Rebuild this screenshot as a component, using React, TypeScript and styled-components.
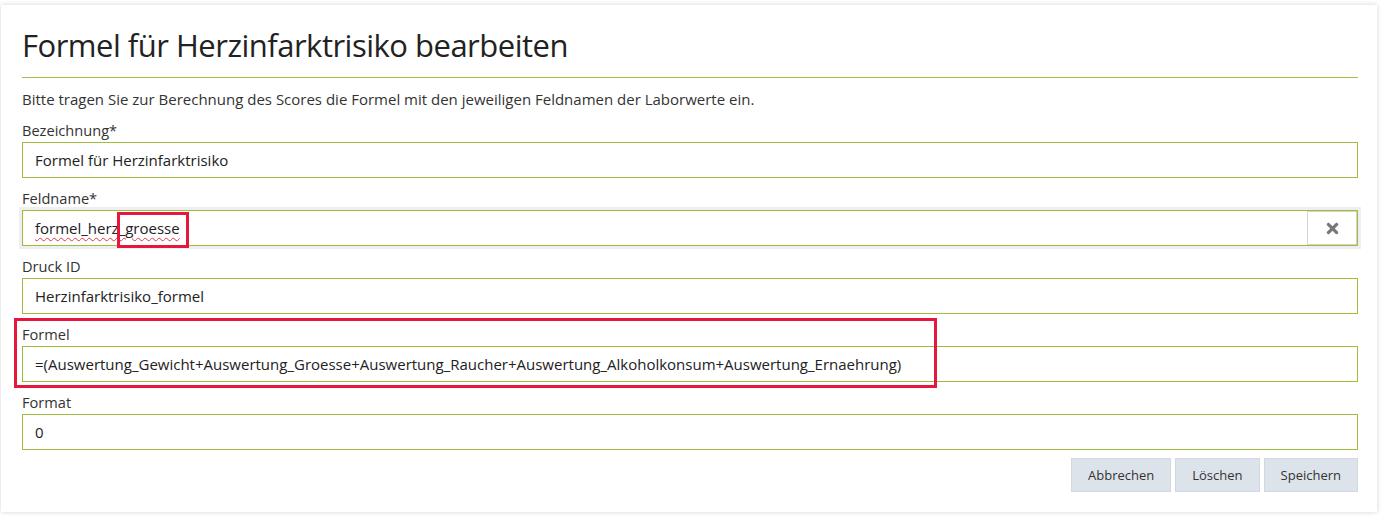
import React from "react";
import styled, { createGlobalStyle } from "styled-components";
import { FaTimes } from "react-icons/fa";

const GlobalStyle = createGlobalStyle`
  html, body { margin: 0; padding: 0; background: #ffffff; }
  body { font-family: "Open Sans", "Noto Sans", "Liberation Sans", sans-serif; color: #333; }
  * { box-sizing: border-box; }
`;

const Page = styled.div`
  padding: 5px 5px 5px 1px;
  width: 1382px;
`;

const Card = styled.div`
  background: #fff;
  box-shadow: 0 0 5px rgba(0, 0, 0, 0.18);
  padding: 0 19px 20px 20px;
`;

const Title = styled.h1`
  margin: 0;
  padding: 21px 0 13px 1px;
  font-size: 31px;
  line-height: 38px;
  letter-spacing: -0.5px;
  font-weight: 400;
  color: #222;
`;

const Divider = styled.hr`
  margin: 0 0 0 1px;
  border: 0;
  border-top: 1px solid #a3bf4a;
`;

const Intro = styled.p`
  margin: 11px 0 11px 1px;
  font-size: 15px;
  line-height: 20px;
  color: #333;
`;

const Field = styled.div`
  position: relative;
  margin-bottom: 10px;
  padding-left: 1px;
`;

const Label = styled.label`
  display: block;
  font-size: 14.6px;
  line-height: 20px;
  margin-bottom: 2px;
  color: #333;
`;

const InputBox = styled.div<{ $framed?: boolean }>`
  position: relative;
  display: flex;
  align-items: stretch;
  height: 36px;
  border: 1px solid #9dbd3c;
  background: #fff;
  box-shadow: ${(p) => (p.$framed ? "0 0 0 3px #efefef" : "none")};
`;

const Value = styled.div`
  flex: 1;
  display: flex;
  align-items: center;
  padding-left: 12px;
  font-size: 15px;
  color: #222;
  white-space: nowrap;
`;

const Misspelled = styled.span`
  text-decoration: underline wavy #e0383d;
  text-decoration-thickness: 1px;
  text-underline-offset: 3px;
`;

const ClearButton = styled.button`
  width: 50px;
  margin: 0;
  border: 1px solid #d4d4d4;
  background: #fff;
  display: flex;
  align-items: center;
  justify-content: center;
  color: #777;
  font-size: 17px;
  padding: 0;
`;

const Highlight = styled.div<{ $top: number; $left: number; $width: number; $height: number }>`
  position: absolute;
  top: ${(p) => p.$top}px;
  left: ${(p) => p.$left}px;
  width: ${(p) => p.$width}px;
  height: ${(p) => p.$height}px;
  border: 3px solid #e5173f;
  pointer-events: none;
`;

const Actions = styled.div`
  display: flex;
  justify-content: flex-end;
  gap: 4px;
  margin-top: -2px;
`;

const ActionButton = styled.button`
  height: 34px;
  padding: 0 16px;
  background: #dde3ea;
  border: 1px solid #d1d8df;
  font-family: "Open Sans", "Noto Sans", "Liberation Sans", sans-serif;
  font-size: 13px;
  color: #333;
`;

export default function App() {
  return (
    <Page>
      <GlobalStyle />
      <Card>
        <Title>Formel für Herzinfarktrisiko bearbeiten</Title>
        <Divider />
        <Intro>
          Bitte tragen Sie zur Berechnung des Scores die Formel mit den jeweiligen Feldnamen der Laborwerte ein.
        </Intro>
        <Field>
          <Label>Bezeichnung*</Label>
          <InputBox>
            <Value>Formel für Herzinfarktrisiko</Value>
          </InputBox>
        </Field>
        <Field>
          <Label>Feldname*</Label>
          <InputBox $framed>
            <Value>
              <Misspelled>formel_herz_groesse</Misspelled>
            </Value>
            <ClearButton aria-label="Leeren">
              <FaTimes />
            </ClearButton>
            <Highlight $top={1} $left={94} $width={72} $height={36} />
          </InputBox>
        </Field>
        <Field>
          <Label>Druck ID</Label>
          <InputBox>
            <Value>Herzinfarktrisiko_formel</Value>
          </InputBox>
        </Field>
        <Field>
          <Label>Formel</Label>
          <InputBox>
            <Value>
              =(Auswertung_Gewicht+Auswertung_Groesse+Auswertung_Raucher+Auswertung_Alkoholkonsum+Auswertung_Ernaehrung)
            </Value>
          </InputBox>
          <Highlight $top={-6} $left={-7} $width={923} $height={70} />
        </Field>
        <Field>
          <Label>Format</Label>
          <InputBox>
            <Value>0</Value>
          </InputBox>
        </Field>
        <Actions>
          <ActionButton>Abbrechen</ActionButton>
          <ActionButton>Löschen</ActionButton>
          <ActionButton>Speichern</ActionButton>
        </Actions>
      </Card>
    </Page>
  );
}
